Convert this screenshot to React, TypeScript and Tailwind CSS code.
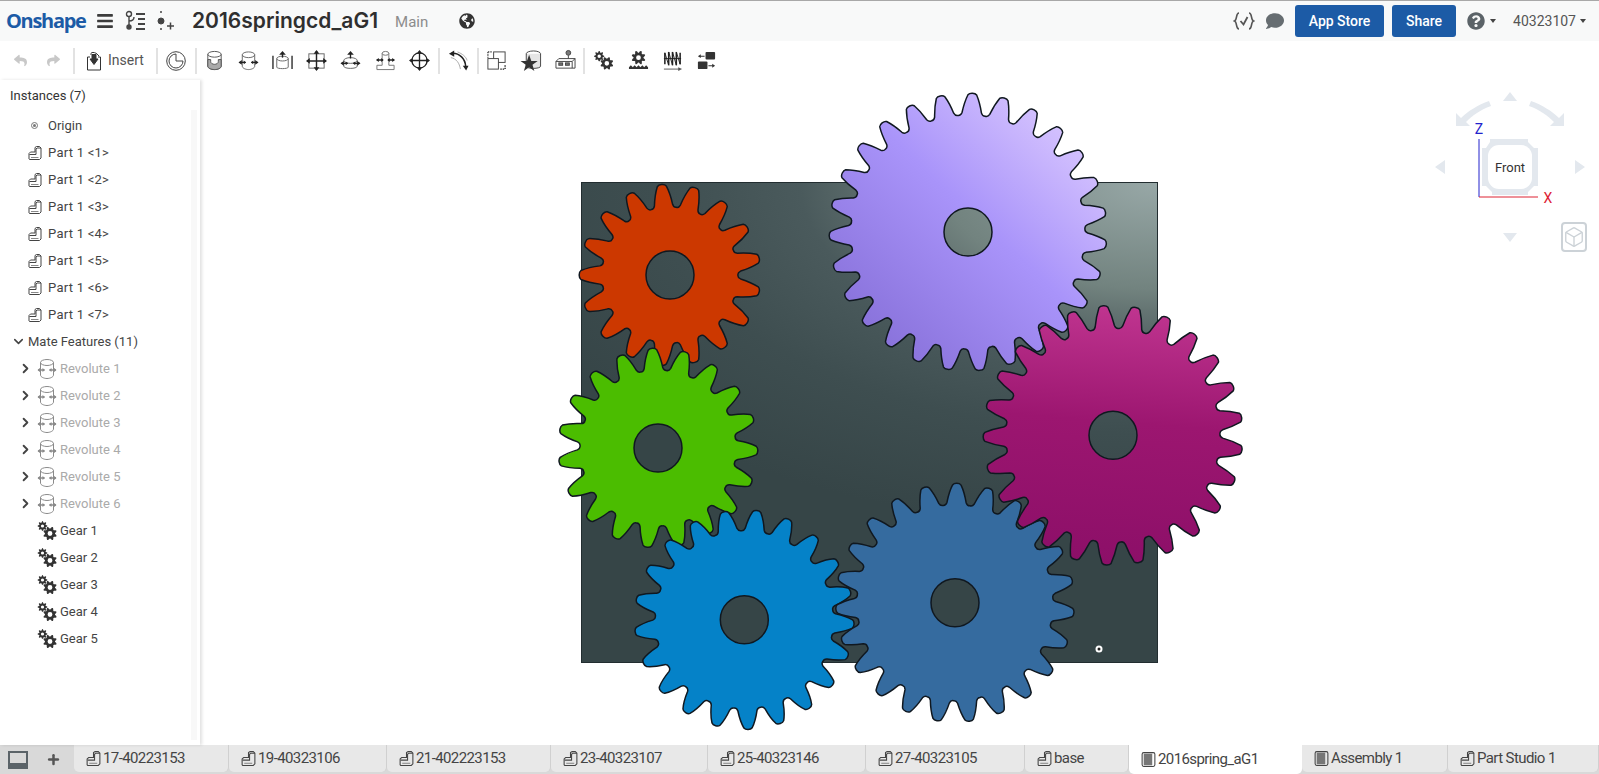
import { Box, ChevronDown, ChevronRight, Plus } from 'lucide-react';
import { FaBars, FaComment, FaGlobeAmericas, FaQuestionCircle, FaReply, FaShare } from 'react-icons/fa';

// Builds a spur gear outline with rounded teeth and a hole through it
function gearPath(cx: number, cy: number, teeth: number, tipR: number, rootR: number, offsetDeg: number, holeR: number) {
  const pitch = (Math.PI * 2) / teeth;
  const h = tipR - rootR;
  const tip = Math.min(0.2, (h * 0.2) / (tipR * pitch));
  let d = '';
  for (let i = 0; i < teeth; i++) {
    const a = (offsetDeg * Math.PI) / 180 + i * pitch;
    const p = (f: number, r: number) => {
      const t = a + f * pitch;
      return `${(cx + r * Math.cos(t)).toFixed(2)} ${(cy + r * Math.sin(t)).toFixed(2)}`;
    };
    if (i === 0) d += `M${p(-0.5, rootR)}`;
    d += `Q${p(-0.4, rootR - h * 0.02)} ${p(-0.35, rootR + h * 0.12)}`;
    d += `C${p(-0.3, rootR + h * 0.36)} ${p(-0.2, rootR + h * 0.74)} ${p(-tip, tipR - h * 0.08)}`;
    d += `C${p(-tip * 0.6, tipR + h * 0.02)} ${p(tip * 0.6, tipR + h * 0.02)} ${p(tip, tipR - h * 0.08)}`;
    d += `C${p(0.2, rootR + h * 0.74)} ${p(0.3, rootR + h * 0.36)} ${p(0.35, rootR + h * 0.12)}`;
    d += `Q${p(0.4, rootR - h * 0.02)} ${p(0.5, rootR)}`;
  }
  d += 'Z';
  d += `M${cx + holeR} ${cy}A${holeR} ${holeR} 0 1 0 ${cx - holeR} ${cy}A${holeR} ${holeR} 0 1 0 ${cx + holeR} ${cy}Z`;
  return d;
}

function PartIcon({ className = 'h-4 w-4' }: { className?: string }) {
  return (
    <svg viewBox="0 0 16 16" className={`shrink-0 ${className}`} fill="none" stroke="#444" strokeWidth="1">
      <path d="M2 14V8.500L3.500 7H8V2.500L9.500 1.500H12.500L14 3V13L12.500 14.500H2.500Z" />
      <path d="M2.500 9.500H9V4L10 3H14" />
      <path d="M4 12.500H11.500" stroke="#888" />
    </svg>
  );
}

function DocIcon() {
  return (
    <svg viewBox="0 0 16 16" className="h-[17px] w-[17px] shrink-0" fill="none">
      <rect x="2" y="1.5" width="12" height="13" rx="1.5" stroke="#444" />
      <rect x="3.5" y="2.5" width="8" height="11" fill="#777" />
    </svg>
  );
}

function GearsIcon() {
  return (
    <svg viewBox="0 0 20 20" className="h-5 w-5 shrink-0">
      <path fillRule="evenodd" fill="#333" d={gearPath(5.5, 5, 8, 5, 3.4, 0, 1.6)} />
      <path fillRule="evenodd" fill="#333" d={gearPath(13, 12.5, 8, 7, 5, 22, 2.4)} />
    </svg>
  );
}

// Cylinder with a small arrow on each side, used for the mate features
function RevoluteIcon() {
  const color = '#8a8a8a';
  return (
    <svg viewBox="0 0 20 20" className="h-5 w-5 shrink-0" fill="none" stroke={color} strokeWidth="1">
      <ellipse cx="10" cy="3.500" rx="6.500" ry="3" />
      <path d="M3.500 3.500V16C3.500 18 7 19.500 10 19.500S16.500 18 16.500 16V3.500" />
      <path d="M1 11H7.500M12.500 11H19" strokeWidth="1.3" />
      <path d="M0.500 11L3.500 8.500V13.500ZM19.500 11L16.500 8.500V13.500ZM8 11L5.500 9V13ZM12 11L14.500 9V13Z" fill={color} stroke="none" />
    </svg>
  );
}

function Sep({ className }: { className: string }) {
  return <div className={`h-[26px] w-[2px] shrink-0 bg-[#e2e2e2] ${className}`} />;
}

// Toolbar glyphs, all drawn on a 22 box
const toolIcons: Record<string, React.ReactNode> = {
  shell: (
    <g fill="none" stroke="#555">
      <ellipse cx="11" cy="4.500" rx="7" ry="3" />
      <path d="M4 4.500V17C4 19 7.500 20.500 11 20.500S18 19 18 17V4.500" />
      <path d="M4 10H7V12C7 16 15 16 15 12V10H18V17C18 19 14.500 20.500 11 20.500S4 19 4 17Z" fill="#aaa" />
    </g>
  ),
  revolute: (
    <g fill="none" stroke="#666">
      <ellipse cx="11" cy="5" rx="6.500" ry="3" />
      <path d="M4.500 5V17C4.500 19 8 20.500 11 20.500S17.500 19 17.500 17V5" />
      <path d="M1.500 13H8M14 13H20.500" stroke="#222" strokeWidth="1.400" />
      <path d="M0.500 13L4 10.500V15.500ZM21.500 13L18 10.500V15.500ZM8.500 13L6 11V15ZM13.500 13L16 11V15Z" fill="#222" stroke="none" />
    </g>
  ),
  slider: (
    <g fill="none" stroke="#666">
      <ellipse cx="11" cy="9" rx="6" ry="2.500" />
      <path d="M5 9V18C5 20 17 20 17 18V9" />
      <path d="M11 1L7.500 5H14.500Z" fill="#222" stroke="none" />
      <path d="M11 4V8" stroke="#222" strokeWidth="1.400" />
      <path d="M1 6V20M21 6V20" stroke="#333" strokeWidth="1.500" />
    </g>
  ),
  planar: (
    <g fill="none" stroke="#666">
      <rect x="3" y="4" width="16" height="15" />
      <path d="M11 1V21M1 11.500H21" stroke="#222" strokeWidth="1.500" />
      <path d="M11 0L8 4H14ZM11 22L8 18H14ZM0 11.500L4 8.500V14.500ZM22 11.500L18 8.500V14.500Z" fill="#222" stroke="none" />
    </g>
  ),
  cylindrical: (
    <g fill="none" stroke="#666">
      <ellipse cx="11" cy="11" rx="7" ry="3" />
      <path d="M4 11V17C4 20 18 20 18 17V11" />
      <path d="M11 1L7.500 5H14.500Z" fill="#222" stroke="none" />
      <path d="M11 4V9M1.500 14H8M14 14H20.500" stroke="#222" strokeWidth="1.400" />
      <path d="M0.500 14L4 11.500V16.500ZM21.500 14L18 11.500V16.500ZM8.500 14L6 12V16ZM13.500 14L16 12V16Z" fill="#222" stroke="none" />
    </g>
  ),
  pin: (
    <g fill="none" stroke="#777">
      <ellipse cx="11" cy="3.500" rx="3.500" ry="2" />
      <path d="M7.500 3.500V16M14.500 3.500V16M7.500 16H2V20.500H20V16H14.500" />
      <path d="M2 10.500H8.500M13.500 10.500H20" stroke="#222" strokeWidth="1.400" />
      <path d="M1 10.500L4 8.500V12.500ZM21 10.500L18 8.500V12.500ZM9 10.500L6.500 8.500V12.500ZM13 10.500L15.500 8.500V12.500Z" fill="#222" stroke="none" />
    </g>
  ),
  ball: (
    <g fill="none" stroke="#222">
      <circle cx="11" cy="11" r="8" strokeWidth="1.300" />
      <path d="M11 1V21M1 11H21" strokeWidth="1.400" />
      <path d="M11 0L8 4H14ZM11 22L8 18H14ZM0 11L4 8V14ZM22 11L18 8V14Z" fill="#222" stroke="none" />
    </g>
  ),
  relation: (
    <g fill="none" stroke="#222">
      <path d="M1 4L6.500 0.500V7ZM19 21.500L15.500 16.500H21.500Z" fill="#222" stroke="none" />
      <path d="M5 3.500C12 3.500 18 9 18.500 17" strokeWidth="1.600" />
      <path d="M3 8C9 9 12 14 13 20" stroke="#aaa" />
      <path d="M10 2C15 4 19 7 20 11" stroke="#aaa" />
    </g>
  ),
  group: (
    <g fill="none" stroke="#444">
      <path d="M2 2H7M2 2V8" strokeDasharray="1.500 1" strokeWidth="1.400" />
      <rect x="8" y="2" width="12" height="11" />
      <rect x="2" y="9" width="11" height="11" fill="#fff" />
      <path d="M15 20H20V15" strokeDasharray="1.500 1" stroke="#222" strokeWidth="1.400" />
    </g>
  ),
  replicate: (
    <g>
      <ellipse cx="13" cy="4" rx="7.500" ry="3" fill="#fff" stroke="#444" />
      <path d="M5.500 4V17C5.500 20 20.500 20 20.500 17V4" fill="#e5e5e5" stroke="#444" />
      <path d="M8.500 5L10.800 11.500L17.500 11.500L12 15.500L14 22L8.500 18L3 22L5 15.500L-0.500 11.500L6.200 11.500Z" fill="#333" />
    </g>
  ),
  mateConnector: (
    <g fill="none" stroke="#444">
      <path d="M1 12L4 9H21V19H1Z" />
      <path d="M1 12H18L21 9M18 12V19" />
      <rect x="4" y="13.500" width="4" height="2.500" fill="#777" />
      <rect x="11" y="13.500" width="4" height="2.500" fill="#777" />
      <circle cx="14" cy="3" r="2.500" fill="#777" />
      <path d="M14 5.500V9" />
    </g>
  ),
  gearMate: <path fillRule="evenodd" fill="#333" d={`${gearPath(6.5, 6.5, 8, 5.5, 3.8, 0, 1.8)}${gearPath(14.5, 14, 8, 7, 5, 22, 2.4)}`} />,
  rackMate: (
    <g>
      <path fillRule="evenodd" fill="#333" d={gearPath(11, 8, 8, 7.500, 5.200, 22, 2.500)} />
      <path d="M1 18L3 16L5 18L7 16L9 18L11 16L13 18L15 16L17 18L19 16L21 18V20H1Z" fill="#333" />
    </g>
  ),
  screwMate: (
    <g fill="none" stroke="#222" strokeWidth="1.600">
      <path d="M3 3V15M7 2V16M11 2V16M15 2V16M19 3V15" />
      <path d="M2 9H20" strokeWidth="1" />
      <path d="M3 3L7 16M7 2L11 16M11 2L15 16M15 2L19 15" strokeWidth="1" />
      <path d="M2 20H18" stroke="#555" strokeWidth="1" />
      <path d="M21 20L17 18V22Z" fill="#555" stroke="none" />
    </g>
  ),
  linearMate: (
    <g fill="#333">
      <rect x="10" y="2" width="10" height="8" rx="1" />
      <rect x="2" y="12" width="10" height="8" rx="1" />
      <path d="M2 6H6V4.500L9 6.500L6 8.500V7H2Z" transform="rotate(180 5.500 6.500)" />
      <path d="M13 16H17V14.500L20 16.500L17 18.500V17H13Z" />
    </g>
  ),
};

const groupOne = ['shell', 'revolute', 'slider', 'planar', 'cylindrical', 'pin', 'ball'];
const groupTwo = ['group', 'replicate', 'mateConnector'];
const groupThree = ['gearMate', 'rackMate', 'screwMate', 'linearMate'];

function ToolIcon({ name }: { name: string }) {
  return (
    <div className="flex h-6 w-[34.2px] shrink-0 items-center justify-center">
      <svg viewBox="0 0 22 22" className="h-[21px] w-[21px] overflow-visible">
        {toolIcons[name]}
      </svg>
    </div>
  );
}

function Caret({ className }: { className: string }) {
  return <span className={`h-0 w-0 border-x-[3.5px] border-t-[4px] border-x-transparent border-t-[#444] ${className}`} />;
}

function Header() {
  return (
    <header className="flex h-[41px] shrink-0 items-center border-t border-[#a8a8a8] bg-[#f8f9f9] font-['Roboto',sans-serif]">
      <span className="ml-[6px] w-[84px] font-['Open_Sans',sans-serif] text-[20px] font-bold tracking-[-1.3px] text-[#1c5ba6]">Onshape</span>
      <FaBars className="ml-[7px] h-[18px] w-[16px] text-[#3c3c3c]" />
      <svg viewBox="0 0 22 22" className="ml-[11px] h-[22px] w-[22px]" fill="none" stroke="#444" strokeWidth="1.4">
        <circle cx="5" cy="4" r="2.500" />
        <circle cx="5" cy="17" r="2" fill="#444" />
        <path d="M5 6.500V15M5 11C9 11 10 9 10 7" />
        <path d="M12 4H21M14 9H21M14 14H21M12 19H21" strokeWidth="1.8" />
      </svg>
      <svg viewBox="0 0 20 22" className="ml-[10px] h-[22px] w-[20px]" fill="#444" stroke="#444">
        <path d="M5 1V4M5 18V21" strokeDasharray="2 1.500" strokeWidth="1.5" />
        <circle cx="5" cy="11" r="3" />
        <path d="M11 16H18M14.500 12.500V19.500" strokeWidth="1.5" />
      </svg>
      <span className="ml-[16px] font-['Inter',sans-serif] text-[21px] font-semibold text-[#2f2f2f]">2016springcd_aG1</span>
      <span className="ml-[17px] mt-[2px] text-[15px] text-[#8c8c8c]">Main</span>
      <FaGlobeAmericas className="ml-[31px] h-4 w-4 text-[#333]" />
      <div className="ml-auto flex items-center">
        <svg viewBox="0 0 22 20" className="h-5 w-[22px]" fill="none" stroke="#555" strokeWidth="1.6">
          <path d="M6 2C2.500 2 4.500 9 1.500 10C4.500 11 2.500 18 6 18M16 2C19.500 2 17.500 9 20.500 10C17.500 11 19.500 18 16 18" />
          <path d="M7.500 10L10.500 13.500L14.500 6" strokeWidth="1.8" />
        </svg>
        <FaComment className="ml-[10px] h-[18px] w-[20px] text-[#666d71]" />
        <button className="ml-[10px] h-[32px] w-[89px] rounded-[3px] bg-[#1c5ba6] text-[14px] font-medium text-white">App Store</button>
        <button className="ml-[8px] h-[32px] w-[64px] rounded-[3px] bg-[#1c5ba6] text-[14px] font-medium text-white">Share</button>
        <FaQuestionCircle className="ml-[11px] h-[18px] w-[18px] text-[#5b6368]" />
        <Caret className="ml-[5px]" />
        <span className="ml-[17px] text-[14px] text-[#555]">40323107</span>
        <Caret className="ml-[4px] mr-[13px]" />
      </div>
    </header>
  );
}

function Toolbar() {
  return (
    <div className="flex h-[39px] shrink-0 items-center bg-white font-['Roboto',sans-serif]">
      <FaReply className="ml-[14px] h-[13px] w-[13px] text-[#c8c8c8]" />
      <FaShare className="ml-[20px] h-[13px] w-[13px] text-[#c8c8c8]" />
      <Sep className="ml-[13px]" />
      <svg viewBox="0 0 16 20" className="ml-[11px] h-[20px] w-[16px]" fill="none" stroke="#333">
        <path d="M4 6H1.500V19H14.500V6H12" />
        <path d="M5 4V2.500C5 1 9 1 11 3L13 5" />
        <path d="M4 8H6V3.500H10V8H12L8 13.500Z" fill="#333" />
      </svg>
      <span className="ml-[6px] w-[36px] text-[14px] text-[#555]">Insert</span>
      <Sep className="ml-[12px]" />
      <svg viewBox="0 0 20 20" className="ml-[8px] h-5 w-5" fill="none" stroke="#444">
        <circle cx="10" cy="10" r="9.300" />
        <path d="M10 3A7 7 0 1 0 17 10H10Z" />
      </svg>
      <Sep className="ml-[9px]" />
      {groupOne.map(name => <ToolIcon key={name} name={name} />)}
      <Sep className="ml-[1.6px]" />
      <div className="ml-[1px]"><ToolIcon name="relation" /></div>
      <Sep className="ml-[1.8px]" />
      <div className="ml-[1px] flex">{groupTwo.map(name => <ToolIcon key={name} name={name} />)}</div>
      <Sep className="ml-[0.4px]" />
      <div className="ml-[2px] flex">{groupThree.map(name => <ToolIcon key={name} name={name} />)}</div>
    </div>
  );
}

function Sidebar() {
  const parts = [1, 2, 3, 4, 5, 6, 7];
  const revolutes = [1, 2, 3, 4, 5, 6];
  const gearRows = [1, 2, 3, 4, 5];
  const row = 'flex h-[27px] items-center';
  return (
    <aside className="relative z-10 flex w-[200px] shrink-0 bg-white text-[13px] text-[#444] shadow-[2px_0_3px_rgba(0,0,0,0.12)] font-['Roboto',sans-serif]">
      <div className="min-w-0 flex-1">
        <div className="flex h-[32px] items-center pl-[10px] text-[#333]">Instances (7)</div>
        <div className={`${row} pl-[31px]`}>
          <span className="flex h-[7px] w-[7px] items-center justify-center rounded-full border border-[#777]">
            <span className="h-[3px] w-[3px] rounded-full bg-[#777]" />
          </span>
          <span className="ml-[10px]">Origin</span>
        </div>
        {parts.map(n => (
          <div key={n} className={`${row} pl-[27px]`}>
            <PartIcon />
            <span className="ml-[5px] tracking-[0.25px]">{`Part 1 <${n}>`}</span>
          </div>
        ))}
        <div className={`${row} pl-[11px]`}>
          <ChevronDown className="h-[15px] w-[15px] text-[#444]" strokeWidth={2.5} />
          <span className="ml-[2px]">Mate Features (11)</span>
        </div>
        {revolutes.map(n => (
          <div key={n} className={`${row} pl-[18px]`}>
            <ChevronRight className="h-[15px] w-[15px] text-[#444]" strokeWidth={3} />
            <span className="ml-[4px]"><RevoluteIcon /></span>
            <span className="ml-[3px] text-[#aaa]">{`Revolute ${n}`}</span>
          </div>
        ))}
        {gearRows.map(n => (
          <div key={n} className={`${row} pl-[37px]`}>
            <GearsIcon />
            <span className="ml-[3px]">{`Gear ${n}`}</span>
          </div>
        ))}
      </div>
      <div className="mb-[5px] mr-[3px] mt-[30px] w-[6px] bg-[#f8f8f8]" />
    </aside>
  );
}

const gears = [
  { cx: 670, cy: 275, teeth: 17, tip: 91, root: 68, off: 180, fill: '#cc3800' },
  { cx: 658, cy: 448, teeth: 19, tip: 100, root: 78, off: 1.5, fill: '#4bbd00' },
  { cx: 968, cy: 232, teeth: 27, tip: 139, root: 117, off: -88.2, fill: 'url(#purple)' },
  { cx: 744.3, cy: 619.7, teeth: 21, tip: 110, root: 89, off: 2.3, fill: '#0582c8' },
  { cx: 955, cy: 602.7, teeth: 23, tip: 119.5, root: 98, off: 4.8, fill: '#356b9f' },
  { cx: 1113, cy: 435.3, teeth: 25, tip: 130, root: 107, off: 6.5, fill: 'url(#magenta)' },
];

function ViewCube() {
  return (
    <g>
      <g fill="#e3e8ee">
        <path d="M1510 92L1503 101H1517Z" />
        <path d="M1435 167L1445 160V174ZM1585 167L1575 160V174ZM1510 242L1503 233H1517Z" />
        <path d="M1489 101L1491 106C1480 110 1472 116 1466 122L1470 126H1456L1456 113L1461 118C1468 111 1478 105 1489 101Z" />
        <path d="M1531 101L1529 106C1540 110 1548 116 1554 122L1550 126H1564L1564 113L1559 118C1552 111 1542 105 1531 101Z" />
        <path d="M1490 139H1528V142L1534 148H1538V186H1534L1528 192V195H1492V192L1486 186H1482V148H1486L1490 142Z" />
      </g>
      <rect x="1488" y="145" width="44" height="44" rx="11" fill="#fff" />
      <text x="1510" y="172" textAnchor="middle" fontFamily="Roboto, sans-serif" fontSize="13" fill="#333">Front</text>
      <path d="M1479 139V197" stroke="#2222cc" strokeWidth="1" fill="none" />
      <path d="M1479 197H1538" stroke="#dd2233" strokeWidth="1" fill="none" />
      <text x="1479" y="134" textAnchor="middle" fontFamily="Roboto, sans-serif" fontSize="14" fill="#2222cc">Z</text>
      <text x="1548" y="203" textAnchor="middle" fontFamily="Roboto, sans-serif" fontSize="14" fill="#dd2233">X</text>
    </g>
  );
}

function Viewport() {
  return (
    <main className="relative min-w-0 flex-1 bg-white">
      <svg viewBox="200 80 1399 665" className="block h-full w-full">
        <defs>
          <radialGradient id="plate" gradientUnits="userSpaceOnUse" cx="0" cy="0" r="700" gradientTransform="translate(1157 182) scale(1 0.5)">
            <stop offset="0" stopColor="#98a8a7" />
            <stop offset="0.306" stopColor="#72837f" />
            <stop offset="0.366" stopColor="#657573" />
            <stop offset="0.51" stopColor="#4a5a5c" />
            <stop offset="0.72" stopColor="#3e4e50" />
            <stop offset="1" stopColor="#364547" />
          </radialGradient>
          <linearGradient id="purple" gradientUnits="userSpaceOnUse" x1="1075" y1="115" x2="860" y2="345">
            <stop offset="0" stopColor="#dac8ff" />
            <stop offset="0.45" stopColor="#a994fa" />
            <stop offset="1" stopColor="#866fd8" />
          </linearGradient>
          <linearGradient id="magenta" gradientUnits="userSpaceOnUse" x1="1125" y1="305" x2="1105" y2="565">
            <stop offset="0" stopColor="#c03590" />
            <stop offset="0.45" stopColor="#9c1670" />
            <stop offset="1" stopColor="#8c0f68" />
          </linearGradient>
        </defs>
        <rect x="581.5" y="182.5" width="576" height="480" fill="url(#plate)" stroke="#222d30" />
        {gears.map(g => (
          <path
            key={g.cx}
            fillRule="evenodd"
            fill={g.fill}
            stroke="#101820"
            strokeWidth="1.5"
            d={gearPath(g.cx, g.cy, g.teeth, g.tip, g.root, g.off, 24)}
          />
        ))}
        <circle cx="1099" cy="649" r="3.5" fill="#fff" />
        <circle cx="1099" cy="649" r="1.5" fill="#222" />
        <ViewCube />
      </svg>
      <div className="absolute right-[12px] top-[142px] flex h-[30px] w-[26px] items-center justify-center rounded-[4px] border-2 border-[#ccd2d7]">
        <Box className="h-[22px] w-[22px] text-[#ccd2d7]" strokeWidth={1.5} />
      </div>
    </main>
  );
}

const tabs = [
  { label: '17-40223153', width: 'w-[155px]', kind: 'part' },
  { label: '19-40323106', width: 'w-[158px]', kind: 'part' },
  { label: '21-402223153', width: 'w-[164px]', kind: 'part' },
  { label: '23-40323107', width: 'w-[157px]', kind: 'part' },
  { label: '25-40323146', width: 'w-[158px]', kind: 'part' },
  { label: '27-40323105', width: 'w-[159px]', kind: 'part' },
  { label: 'base', width: 'w-[104px]', kind: 'part' },
  { label: '2016spring_aG1', width: 'w-[173px]', kind: 'doc', active: true },
  { label: 'Assembly 1', width: 'w-[146px]', kind: 'doc' },
  { label: 'Part Studio 1', width: 'w-[151px]', kind: 'part' },
];

function TabBar() {
  return (
    <footer className="flex h-[29px] shrink-0 bg-[#d9d9d9] font-['Roboto',sans-serif] text-[15px] tracking-[-0.6px] text-[#444]">
      <div className="flex w-[74px] shrink-0 items-center">
        <svg viewBox="0 0 20 20" className="ml-[8px] h-5 w-5" fill="none" stroke="#5b6368" strokeWidth="2">
          <rect x="1" y="2" width="18" height="16" />
          <path d="M2 15H18" strokeWidth="4" />
        </svg>
        <Plus className="ml-[18px] h-[15px] w-[15px] text-[#555]" strokeWidth={4} />
      </div>
      {tabs.map(t => (
        <div
          key={t.label}
          className={`flex shrink-0 items-center rounded-b-[5px] pl-[11px] ${t.width} ${t.active ? 'bg-white' : 'mb-[2px] border-r border-[#d0d0d0] bg-[#e8e8e8]'}`}
        >
          {t.kind === 'part' ? <PartIcon className="h-[17px] w-[17px]" /> : <DocIcon />}
          <span className="ml-[1px]">{t.label}</span>
        </div>
      ))}
    </footer>
  );
}

export default function App() {
  return (
    <div className="flex h-[774px] w-[1599px] flex-col overflow-hidden bg-white">
      <Header />
      <Toolbar />
      <div className="flex min-h-0 flex-1">
        <Sidebar />
        <Viewport />
      </div>
      <TabBar />
    </div>
  );
}
